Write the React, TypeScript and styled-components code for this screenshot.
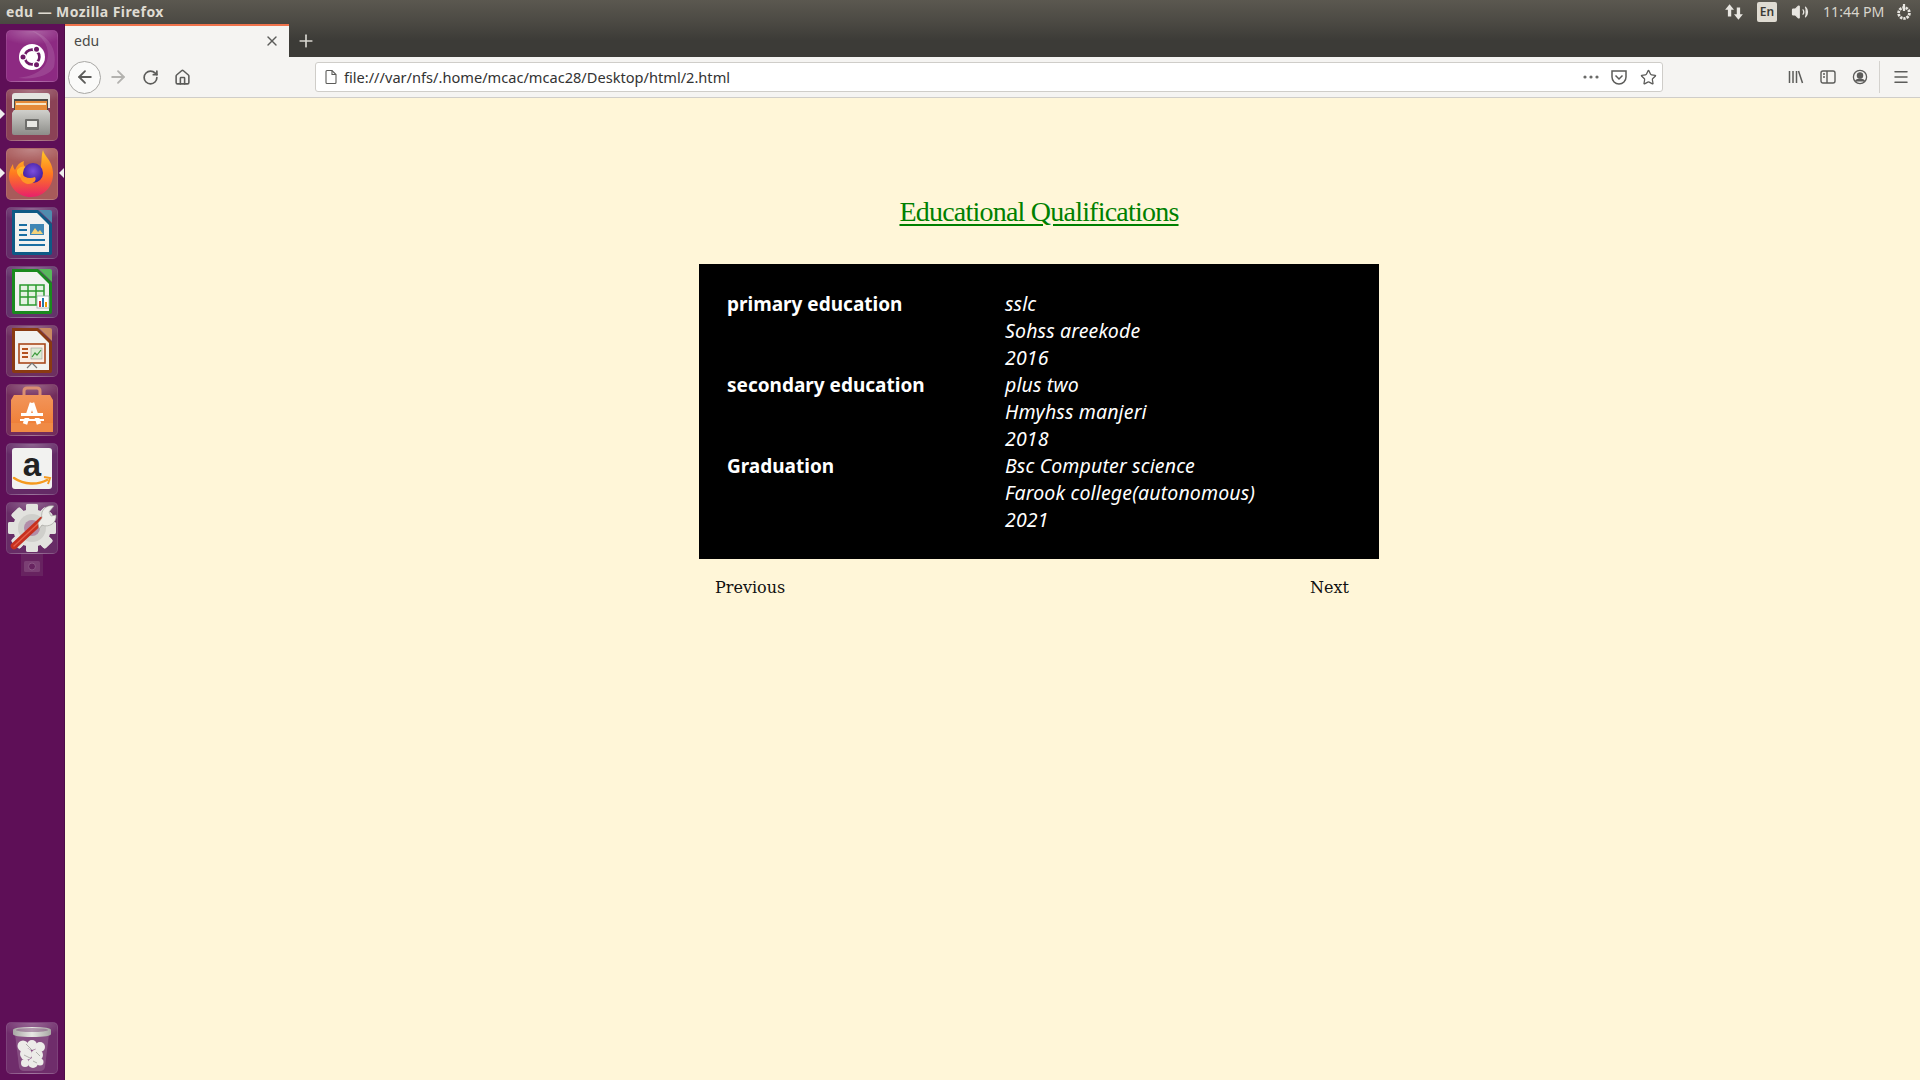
import * as React from 'react';
import styled, { createGlobalStyle } from 'styled-components';
import { ArrowLeft, ArrowRight, RotateCw, House, X, Plus, Star, Menu, Volume2 } from 'lucide-react';

const GlobalStyle = createGlobalStyle`
  html, body { margin: 0; padding: 0; background: #fff6d8; }
  #root { width: 1920px; height: 1080px; overflow: hidden; }
`;

const UI_FONT = `"Noto Sans", "Open Sans", sans-serif`;

const Shell = styled.div`
  display: flex;
  flex-direction: column;
  width: 1920px;
  height: 1080px;
  font-family: ${UI_FONT};
`;

const TopBar = styled.header`
  display: flex;
  align-items: center;
  height: 24px;
  flex: none;
  padding: 0 6px;
  box-sizing: border-box;
  background: linear-gradient(#5b5850, #4a4842);
  color: #dfdbd2;
`;

const WindowTitle = styled.div`
  font-size: 14px;
  font-weight: 700;
  letter-spacing: 0.42px;
  line-height: 22px;
  flex: 1;
`;

const Indicators = styled.div`
  display: flex;
  align-items: center;
  color: #e8e6e1;
`;

const Indicator = styled.div<{ $w: number }>`
  display: flex;
  align-items: center;
  justify-content: center;
  width: ${(p) => p.$w}px;
`;

const LangBox = styled.div`
  width: 20px;
  height: 20px;
  border-radius: 2px;
  background: #dfdbd2;
  color: #3c3b37;
  font-size: 12px;
  font-weight: 600;
  line-height: 20px;
  text-align: center;
`;

const Clock = styled.div`
  width: 60px;
  margin-right: 11px;
  font-size: 14.2px;
  line-height: 22px;
  color: #d9d5cc;
  white-space: nowrap;
`;

const Desktop = styled.div`
  display: flex;
  flex: 1;
  min-height: 0;
`;

const Launcher = styled.nav`
  position: relative;
  display: flex;
  flex-direction: column;
  align-items: center;
  gap: 7px;
  width: 65px;
  flex: none;
  box-sizing: border-box;
  padding: 6px 0 6px;
  background: #5e0f57;
  border-right: 1px solid #4d0c47;
`;

const Tile = styled.div<{ $tint: string; $glow?: string }>`
  position: relative;
  width: 52px;
  height: 52px;
  flex: none;
  border-radius: 5px;
  box-sizing: border-box;
  border: 1px solid rgba(255, 255, 255, 0.1);
  background:
    radial-gradient(ellipse 34px 14px at 50% 0, ${(p) => p.$glow ?? 'rgba(255,255,255,.28)'}, transparent),
    ${(p) => p.$tint};
  svg { position: absolute; left: -1px; top: -1px; display: block; }
`;

const Pip = styled.span<{ $side: 'left' | 'right'; $top: number }>`
  position: absolute;
  top: ${(p) => p.$top}px;
  ${(p) => (p.$side === 'left' ? 'left: 0;' : 'right: 0;')}
  width: 0;
  height: 0;
  border-top: 5px solid transparent;
  border-bottom: 5px solid transparent;
  ${(p) => (p.$side === 'left' ? 'border-left: 5px solid #eee;' : 'border-right: 5px solid #eee;')}
`;

const GhostCamera = styled.div`
  width: 22px;
  height: 22px;
  margin-top: -7px;
  flex: none;
  opacity: 0.75;
`;

const TrashSlot = styled.div`
  margin-top: auto;
`;

const Browser = styled.div`
  display: flex;
  flex-direction: column;
  flex: 1;
  min-width: 0;
`;

const TabStrip = styled.div`
  display: flex;
  align-items: stretch;
  height: 33px;
  flex: none;
  background: linear-gradient(#4a4842, #3c3b37 50%);
`;

const Tab = styled.div`
  display: flex;
  align-items: center;
  justify-content: space-between;
  width: 224px;
  box-sizing: border-box;
  padding: 0 9px 2px 9px;
  background: #f5f4f2;
  border-top: 2px solid #f0734c;
  color: #4a4a48;
  font-size: 14px;
`;

const NewTab = styled.div`
  display: flex;
  align-items: center;
  justify-content: center;
  width: 34px;
  color: #d8d6d0;
`;

const NavBar = styled.div`
  display: flex;
  align-items: center;
  height: 41px;
  flex: none;
  box-sizing: border-box;
  background: #f5f4f2;
  border-bottom: 1px solid #cfcdc9;
`;

const BackButton = styled.div`
  display: flex;
  align-items: center;
  justify-content: center;
  width: 33px;
  height: 33px;
  margin-left: 3px;
  border-radius: 50%;
  border: 1px solid #a8a7a4;
  box-sizing: border-box;
  background: #fafaf9;
  color: #5c5c5a;
`;

const NavButton = styled.div<{ $w: number; $faded?: boolean; $gap?: number }>`
  display: flex;
  align-items: center;
  justify-content: center;
  width: ${(p) => p.$w}px;
  height: 32px;
  margin-left: ${(p) => p.$gap ?? 0}px;
  color: ${(p) => (p.$faded ? '#b3b2af' : '#5c5c5a')};
`;

const UrlBar = styled.div`
  display: flex;
  align-items: center;
  width: 1348px;
  height: 30px;
  margin-left: 117px;
  box-sizing: border-box;
  background: #fff;
  border: 1px solid #cfcdc9;
  border-radius: 3px;
  padding-left: 7px;
`;

const UrlText = styled.div`
  margin-left: 5px;
  flex: 1;
  font-size: 14.6px;
  color: #333;
  white-space: nowrap;
`;

const NavSeparator = styled.div`
  width: 1px;
  height: 32px;
  background: #d4d2ce;
  margin: 0 0 0 3px;
`;

const Page = styled.main`
  flex: 1;
  background: #fff6d8;
  padding: 98px 0 0 634px;
`;

const Column = styled.div`
  width: 680px;
`;

const Heading = styled.h1`
  margin: 0 0 36px;
  font: 400 28px/32px "Liberation Serif", serif;
  letter-spacing: -0.78px;
  color: #008000;
  text-align: center;
  text-decoration: underline;
  text-decoration-thickness: 2px;
  text-underline-offset: 3px;
`;

const Panel = styled.section`
  display: grid;
  grid-template-columns: 278px 1fr;
  padding: 27px 28px 25px;
  background: #000;
  color: #fff;
  font-size: 19px;
  line-height: 27px;
`;

const Label = styled.div`
  font-weight: 700;
`;

const Details = styled.div`
  margin: -1px 0 1px;
  font-style: italic;
  font-size: 19.5px;
  letter-spacing: 0.15px;
`;

const Pager = styled.div`
  display: flex;
  justify-content: space-between;
  margin-top: 19px;
  padding: 0 30px 0 16px;
  font: 400 16px/20px "DejaVu Serif", serif;
  color: #111;
`;

const education = [
  { label: 'primary education', lines: ['sslc', 'Sohss areekode', '2016'] },
  { label: 'secondary education', lines: ['plus two', 'Hmyhss manjeri', '2018'] },
  { label: 'Graduation', lines: ['Bsc Computer science', 'Farook college(autonomous)', '2021'] },
];

const Ico = ({ children }: { children: React.ReactNode }) => (
  <svg width="52" height="52" viewBox="0 0 52 52">
    {children}
  </svg>
);

const UbuntuIcon = () => (
  <Ico>
    <path d="M26 1c16 4 26 18 22 36-4 8-18 13-36 11 16-2 30-8 30-24 0-9-6-18-16-23z" fill="#fff" opacity=".12" />
    <circle cx="26" cy="27" r="13" fill="#fff" />
    <circle cx="26" cy="27" r="7.4" fill="none" stroke="#6f1a68" strokeWidth="2.6" />
    {[180, 60, -60].map((a) => {
      const x = 26 + 9 * Math.cos((a * Math.PI) / 180);
      const y = 27 + 9 * Math.sin((a * Math.PI) / 180);
      return (
        <g key={a}>
          <circle cx={x} cy={y} r="3.7" fill="#fff" />
          <circle cx={x} cy={y} r="2.5" fill="#6f1a68" />
        </g>
      );
    })}
  </Ico>
);

const FilesIcon = () => (
  <Ico>
    <defs>
      <linearGradient id="cab" x1="0" y1="0" x2="0" y2="1">
        <stop offset="0" stopColor="#d0d0cc" />
        <stop offset="1" stopColor="#8d8d89" />
      </linearGradient>
    </defs>
    <path d="M6 7q0-3 3-3h32q3 0 3 3v12H6z" fill="#e4e4e0" />
    <rect x="8" y="10" width="34" height="12" fill="#4b4b48" />
    <rect x="9" y="12" width="32" height="9" fill="#e58b3a" />
    <rect x="10" y="14" width="30" height="2" fill="#f7e6c6" />
    <path d="M6 24l2-3h34l2 3v20q0 2-2 2H8q-2 0-2-2z" fill="url(#cab)" />
    <rect x="19" y="30" width="14" height="11" rx="1" fill="#6e6e6b" />
    <rect x="21" y="32" width="10" height="6" fill="#e8e8e4" />
  </Ico>
);

const FirefoxIcon = () => (
  <Ico>
    <defs>
      <linearGradient id="fxo" x1="0.5" y1="0" x2="0.5" y2="1">
        <stop offset="0" stopColor="#ffc928" />
        <stop offset=".5" stopColor="#ff7a1f" />
        <stop offset="1" stopColor="#e8206a" />
      </linearGradient>
      <radialGradient id="fxp" cx=".5" cy=".4" r=".6">
        <stop offset="0" stopColor="#7a4fe0" />
        <stop offset="1" stopColor="#3e1a9a" />
      </radialGradient>
    </defs>
    <path d="M37 2c1 6 9 10 10 22 1 14-9 25-22 25C12 49 3 39 3 28c0-5 2-9 4-12 0 3 1 5 2 6 2-5 5-8 9-9-1 3 0 5 1 6 3-1 7-1 10 0 3 2 5 4 5 4 2-7 1-15 3-21z" fill="url(#fxo)" />
    <path d="M11 22c4-5 9-4 13-1-3 0-6 2-7 4-1 3 1 5 3 6-5 0-10-4-9-9z" fill="#ffb52c" />
    <circle cx="27" cy="25" r="10" fill="url(#fxp)" />
    <path d="M15 25c3 5 9 6 14 4 2 3-1 7-7 7-6-1-9-6-7-11z" fill="#ff9426" />
  </Ico>
);

const OfficeIcon = ({ frame, corner, children }: { frame: string; corner: string; children: React.ReactNode }) => (
  <Ico>
    <path d="M6 3h26l14 14v29q0 2-2 2H8q-2 0-2-2z" fill={frame} />
    <path d="M33 3h11q2 0 2 2v11z" fill={corner} />
    <path d="M9 6h22l12 12v27H9z" fill="#f2f2f0" />
    {children}
  </Ico>
);

const WriterIcon = () => (
  <OfficeIcon frame="#0e5a85" corner="#4f8cae">
    <path d="M13 22h8v2h-8zM13 27h8v2h-8zM13 32h26v2H13zM13 37h26v2H13z" fill="#1a6fa3" />
    <rect x="13" y="17" width="8" height="2" fill="#1a6fa3" />
    <rect x="24" y="17" width="14" height="11" fill="#3f86b5" />
    <path d="M25 27l4-6 3 4 2-2 3 4z" fill="#f3d27a" />
  </OfficeIcon>
);

const CalcIcon = () => (
  <OfficeIcon frame="#1a8a1e" corner="#57b85a">
    <path d="M14 19h24v20H14z" fill="#e4f3e2" stroke="#2a9a2e" strokeWidth="1.5" />
    <path d="M14 25h24M14 31h24M22 19v20M30 19v20" stroke="#2a9a2e" strokeWidth="1.5" />
    <rect x="31" y="30" width="12" height="12" fill="#fff" stroke="#9aa" strokeWidth=".8" />
    <path d="M33 35h2v6h-2z" fill="#d33" />
    <path d="M36 32h2v9h-2z" fill="#27a" />
    <path d="M39 36h2v5h-2z" fill="#e90" />
  </OfficeIcon>
);

const ImpressIcon = () => (
  <OfficeIcon frame="#8a3a12" corner="#c88a62">
    <rect x="13" y="19" width="26" height="19" fill="#fbeee4" stroke="#a8481c" strokeWidth="1.6" />
    <path d="M16 23h6v2h-6zM16 27h6v2h-6zM16 31h6v2h-6z" fill="#b5521f" />
    <rect x="25" y="23" width="11" height="11" fill="#d9ead2" stroke="#999" strokeWidth=".6" />
    <path d="M26 32l3-4 2 2 4-5" stroke="#3c9a3c" strokeWidth="1.2" fill="none" />
    <path d="M26 38l-5 5M26 38l5 5" stroke="#777" strokeWidth="1.2" />
  </OfficeIcon>
);

const SoftwareIcon = () => (
  <Ico>
    <defs>
      <linearGradient id="bag" x1="0" y1="0" x2="0" y2="1">
        <stop offset="0" stopColor="#f2955a" />
        <stop offset="1" stopColor="#ee7a30" />
      </linearGradient>
    </defs>
    <path d="M18 14V7q0-3 3-3h10q3 0 3 3v7" fill="none" stroke="#d98f72" strokeWidth="3" />
    <path d="M5 16l3-5h36l3 5v32H5z" fill="url(#bag)" />
    <rect x="5" y="39" width="42" height="9" fill="#f08a45" />
    <path d="M26 19L19 40M26 19l7 21" stroke="#fff" strokeWidth="4.5" />
    <rect x="15" y="29" width="22" height="3" fill="#fff" />
    <rect x="17" y="32" width="18" height="2" fill="#ef8038" />
    <rect x="14" y="35" width="24" height="2" fill="#fff" />
  </Ico>
);

const AmazonIcon = () => (
  <Ico>
    <rect x="6" y="5" width="40" height="41" rx="3" fill="#f2f2f0" />
    <text x="26" y="33" textAnchor="middle" fontFamily="Liberation Sans, sans-serif" fontWeight="700" fontSize="33" fill="#222">
      a
    </text>
    <path d="M8 35c10 7 24 7 33 2" fill="none" stroke="#f59a1f" strokeWidth="2.4" strokeLinecap="round" />
    <path d="M38 34l6 1-2 6" fill="none" stroke="#f59a1f" strokeWidth="2" />
  </Ico>
);

const SettingsIcon = () => {
  const teeth = [0, 45, 90, 135, 180, 225, 270, 315];
  return (
    <Ico>
      <g fill="#e2e2de">
        {teeth.map((a) => (
          <rect key={a} x="20" y="2" width="12" height="48" rx="2" transform={`rotate(${a} 26 26)`} />
        ))}
        <circle cx="26" cy="26" r="19" />
      </g>
      <circle cx="26" cy="26" r="14" fill="#cfcfcb" />
      <circle cx="26" cy="26" r="8" fill="#8f3b7f" opacity=".45" />
      <path d="M8 44L36 18" stroke="#c7301f" strokeWidth="6.5" strokeLinecap="round" />
      <path d="M8 44L36 18" stroke="#e4604c" strokeWidth="1.4" strokeLinecap="round" />
      <path d="M32 21l4-5c-2-7 4-14 12-12l-5 6 2 4 5-1c1 8-7 13-14 10l-3 4z" fill="#ecece8" stroke="#9a9a96" strokeWidth=".6" />
    </Ico>
  );
};

const TrashIcon = () => (
  <Ico>
    <defs>
      <linearGradient id="rim" x1="0" y1="0" x2="1" y2="0">
        <stop offset="0" stopColor="#a8a8a4" />
        <stop offset=".5" stopColor="#e8e8e4" />
        <stop offset="1" stopColor="#a8a8a4" />
      </linearGradient>
    </defs>
    <path d="M9 12l4 33q1 4 5 4h16q4 0 5-4l4-33z" fill="#fff" opacity=".16" />
    <path d="M7 8q0-3 19-3t19 3v4q0 3-19 3T7 12z" fill="url(#rim)" />
    <ellipse cx="26" cy="8" rx="16" ry="2" fill="#7b4a78" opacity=".5" />
    <g fill="#ecebe8">
      <circle cx="17" cy="24" r="5.5" />
      <circle cx="26" cy="23" r="5" />
      <circle cx="34" cy="25" r="5" />
      <circle cx="20" cy="32" r="6" />
      <circle cx="31" cy="33" r="6" />
      <circle cx="19" cy="41" r="4" />
      <circle cx="27" cy="41" r="5" />
      <circle cx="34" cy="40" r="3.5" />
    </g>
    <path d="M20 22l6 6M30 30l4 4M18 33l6 3M27 39l4 2" stroke="#b0b0ac" strokeWidth="1" />
  </Ico>
);

const PowerGear = () => (
  <svg width="18" height="18" viewBox="0 0 18 18" fill="none" stroke="#e8e6e1">
    <circle cx="9" cy="10" r="5.4" strokeWidth="2.8" strokeDasharray="2.4 .9" />
    <path d="M9 1v7" strokeWidth="2.2" />
  </svg>
);

const NetArrows = () => (
  <svg width="20" height="20" viewBox="0 0 18 18" fill="#e8e6e1">
    <path d="M5 2l4 5H6.5v6h-3V7H1zM13 16l-4-5h2.5V5h3v6H17z" />
  </svg>
);

const PageGlyph = () => (
  <svg width="16" height="16" viewBox="0 0 16 16" fill="none" stroke="#5c5c5a" strokeWidth="1.1">
    <path d="M3 2.5q0-1 1-1h5l4 4v8q0 1-1 1H4q-1 0-1-1z" />
    <path d="M9 1.5v4h4" />
  </svg>
);

const PocketGlyph = () => (
  <svg width="18" height="16" viewBox="0 0 18 16" fill="none" stroke="#5c5c5a" strokeWidth="1.5">
    <path d="M2 2h14v6a7 7 0 0 1-14 0z" />
    <path d="M5.5 6.5L9 10l3.5-3.5" />
  </svg>
);

const LibraryGlyph = () => (
  <svg width="16" height="16" viewBox="0 0 16 16" fill="none" stroke="#5c5c5a" strokeWidth="1.5">
    <path d="M1.5 2v12M5 2v12M8.5 2v12M10.5 2l4 12" />
  </svg>
);

const SidebarGlyph = () => (
  <svg width="16" height="16" viewBox="0 0 16 16" fill="none" stroke="#5c5c5a" strokeWidth="1.4">
    <rect x="1" y="2" width="14" height="12" rx="2" />
    <path d="M7 2v12M3 5h2M3 8h2" />
  </svg>
);

const AccountGlyph = () => (
  <svg width="16" height="16" viewBox="0 0 16 16" fill="none" stroke="#5c5c5a" strokeWidth="1.3">
    <circle cx="8" cy="8" r="6.6" />
    <circle cx="8" cy="6.4" r="2.6" fill="#5c5c5a" />
    <path d="M3.5 12.5c1-3 8-3 9 0" fill="#5c5c5a" />
  </svg>
);

const CameraGlyph = () => (
  <svg width="22" height="22" viewBox="0 0 22 22">
    <rect width="22" height="22" fill="#6a2a63" />
    <rect x="3" y="7" width="16" height="11" rx="1.5" fill="#85507e" />
    <circle cx="11" cy="12.5" r="3.5" fill="#6a2a63" stroke="#9a6e94" />
  </svg>
);

const App = () => (
  <Shell>
    <GlobalStyle />
    <TopBar>
      <WindowTitle>edu — Mozilla Firefox</WindowTitle>
      <Indicators>
        <Indicator $w={46}><NetArrows /></Indicator>
        <Indicator $w={20}><LangBox>En</LangBox></Indicator>
        <Indicator $w={46}><Volume2 size={18} fill="#e8e6e1" strokeWidth={1.6} /></Indicator>
        <Clock>11:44 PM</Clock>
        <Indicator $w={20}><PowerGear /></Indicator>
      </Indicators>
    </TopBar>
    <Desktop>
      <Launcher>
        <Tile $tint="#8d2a82"><UbuntuIcon /></Tile>
        <Tile $tint="#8b4256"><FilesIcon /></Tile>
        <Tile $tint="#a85a5a"><FirefoxIcon /></Tile>
        <Tile $tint="#642d68"><WriterIcon /></Tile>
        <Tile $tint="#63336a"><CalcIcon /></Tile>
        <Tile $tint="#6d2f60"><ImpressIcon /></Tile>
        <Tile $tint="#722d5c"><SoftwareIcon /></Tile>
        <Tile $tint="#642a66"><AmazonIcon /></Tile>
        <Tile $tint="#672c66"><SettingsIcon /></Tile>
        <GhostCamera><CameraGlyph /></GhostCamera>
        <TrashSlot>
          <Tile $tint="#6f2d6b"><TrashIcon /></Tile>
        </TrashSlot>
        <Pip $side="left" $top={85} />
        <Pip $side="left" $top={144} />
        <Pip $side="right" $top={144} />
      </Launcher>
      <Browser>
        <TabStrip>
          <Tab>
            edu
            <X size={16} color="#5c5c5a" />
          </Tab>
          <NewTab><Plus size={20} /></NewTab>
        </TabStrip>
        <NavBar>
          <BackButton><ArrowLeft size={20} strokeWidth={2.2} /></BackButton>
          <NavButton $w={33} $faded><ArrowRight size={20} strokeWidth={2.2} /></NavButton>
          <NavButton $w={32}><RotateCw size={17} strokeWidth={2.4} /></NavButton>
          <NavButton $w={32}><House size={17} strokeWidth={2.2} /></NavButton>
          <UrlBar>
            <PageGlyph />
            <UrlText>file:///var/nfs/.home/mcac/mcac28/Desktop/html/2.html</UrlText>
            <NavButton $w={26}>
              <svg width="16" height="4" viewBox="0 0 16 4" fill="#6a6a68">
                <circle cx="2" cy="2" r="1.6" /><circle cx="8" cy="2" r="1.6" /><circle cx="14" cy="2" r="1.6" />
              </svg>
            </NavButton>
            <NavButton $w={30}><PocketGlyph /></NavButton>
            <NavButton $w={28}><Star size={17} strokeWidth={1.8} /></NavButton>
          </UrlBar>
          <NavButton $w={32} $gap={117}><LibraryGlyph /></NavButton>
          <NavButton $w={32}><SidebarGlyph /></NavButton>
          <NavButton $w={32}><AccountGlyph /></NavButton>
          <NavSeparator />
          <NavButton $w={32} $gap={5}><Menu size={18} /></NavButton>
        </NavBar>
        <Page>
          <Column>
            <Heading>Educational Qualifications</Heading>
            <Panel>
              {education.map((row) => (
                <React.Fragment key={row.label}>
                  <Label>{row.label}</Label>
                  <Details>
                    {row.lines.map((line) => (
                      <div key={line}>{line}</div>
                    ))}
                  </Details>
                </React.Fragment>
              ))}
            </Panel>
            <Pager>
              <span>Previous</span>
              <span>Next</span>
            </Pager>
          </Column>
        </Page>
      </Browser>
    </Desktop>
  </Shell>
);

export default App;
